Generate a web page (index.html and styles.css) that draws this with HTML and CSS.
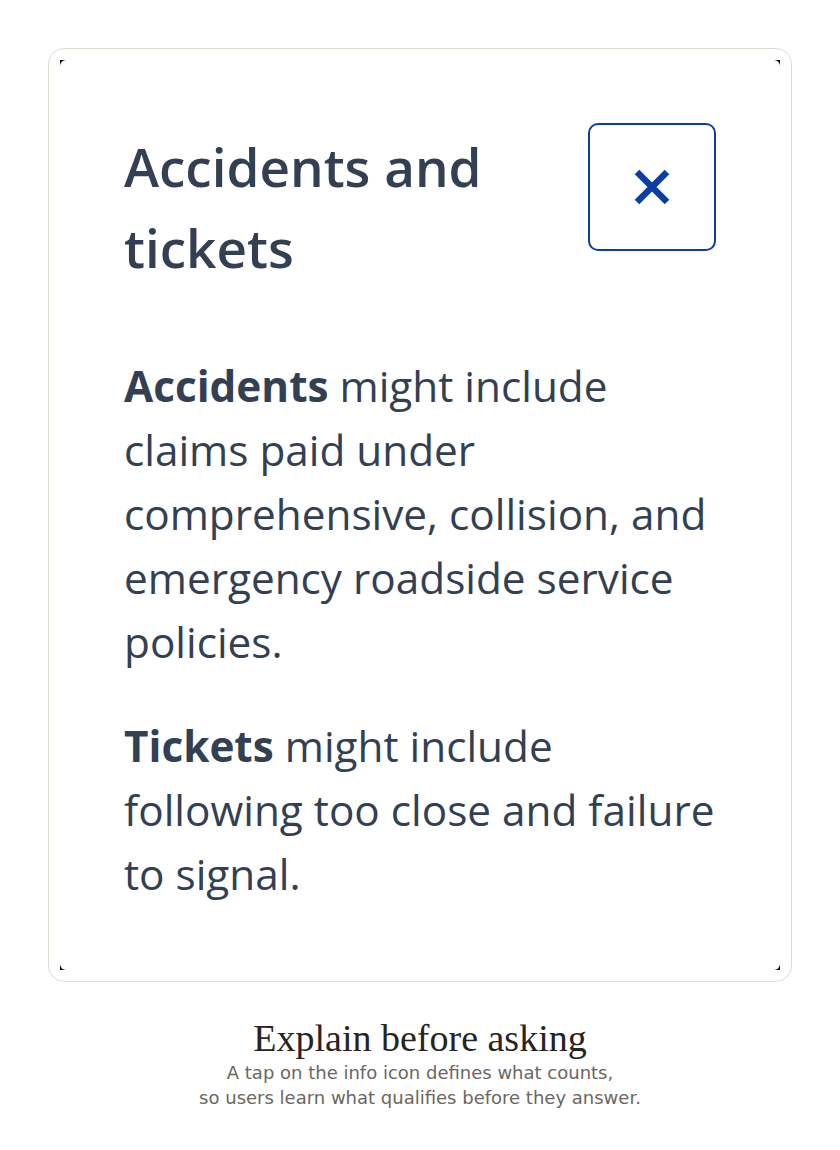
FILE: index.html
```html
<!DOCTYPE html>
<html lang="en">
<head>
    <meta charset="UTF-8">
    <meta name="viewport" content="width=device-width, initial-scale=1.0">
    <title>Accidents and tickets</title>
    <link rel="stylesheet" href="styles.css">
</head>
<body>
    <div class="page">
        <div class="frame">
            <div class="screen">
                <div class="sheet">
                    <div class="sheet-header">
                        <h1 class="sheet-title">Accidents and tickets</h1>
                        <button class="close-btn" type="button" aria-label="Close">
                            <svg width="40" height="40" viewBox="0 0 40 40" aria-hidden="true">
                                <path d="M5 5 L35 35 M35 5 L5 35" stroke="currentColor" stroke-width="6.5" fill="none"/>
                            </svg>
                        </button>
                    </div>
                    <p class="sheet-text"><strong>Accidents</strong> might include claims paid under comprehensive, collision, and emergency roadside service policies.</p>
                    <p class="sheet-text"><strong>Tickets</strong> might include following too close and failure to signal.</p>
                </div>
            </div>
        </div>

        <div class="caption">
            <div class="caption-title">Explain before asking</div>
            <div class="caption-text">A tap on the info icon defines what counts,<br>so users learn what qualifies before they answer.</div>
        </div>
    </div>
</body>
</html>
```

FILE: styles.css
```css
:root {
    --text-color: #333f52;
    --accent: #0b3ea3;
    --frame-border: #dedbd0;
}

* {
    box-sizing: border-box;
    margin: 0;
    padding: 0;
}

body {
    background: #ffffff;
    font-family: 'Open Sans', 'Noto Sans', sans-serif;
    color: var(--text-color);
}

.page {
    padding: 48px;
}

.frame {
    border: 1px solid var(--frame-border);
    border-radius: 16px;
    padding: 11px;
}

/* black shows only in the four corners */
.screen {
    background: #000000;
}

.sheet {
    background: #ffffff;
    border-radius: 6px;
    padding: 64px;
}

.sheet-header {
    display: flex;
    justify-content: space-between;
    align-items: flex-start;
    gap: 40px;
    margin-bottom: 68px;
}

.sheet-title {
    font-size: 53px;
    line-height: 81px;
    font-weight: 600;
    max-width: 400px;
    padding-top: 2px;
    margin-bottom: -2px;
}

.close-btn {
    flex: 0 0 128px;
    width: 128px;
    height: 128px;
    margin-top: -1px;
    border: 2px solid var(--accent);
    border-radius: 10px;
    background: #ffffff;
    color: var(--accent);
    display: flex;
    align-items: center;
    justify-content: center;
    cursor: pointer;
}

.sheet-text {
    font-size: 42.3px;
    line-height: 64px;
}

.sheet-text + .sheet-text {
    margin-top: 40px;
}

.sheet-text strong {
    font-weight: 700;
}

.caption {
    text-align: center;
    padding-top: 34px;
}

.caption-title {
    font-family: 'Liberation Serif', serif;
    font-size: 38px;
    line-height: 44px;
    color: #27231f;
}

.caption-text {
    font-family: 'DejaVu Sans', sans-serif;
    font-size: 18px;
    line-height: 25px;
    color: #6b6660;
}
```
